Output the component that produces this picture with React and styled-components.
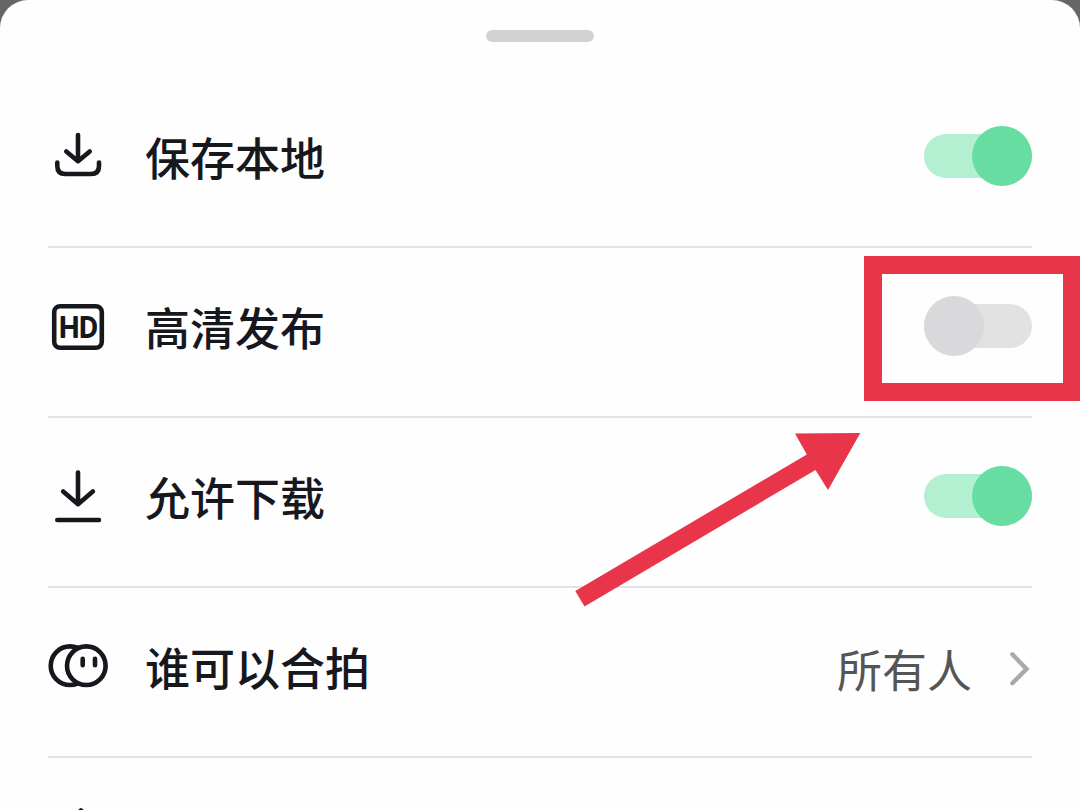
import React, { useState } from "react";
import styled, { createGlobalStyle } from "styled-components";

const GlobalStyle = createGlobalStyle`
  * { box-sizing: border-box; }
  body {
    margin: 0;
    background: #666;
    font-family: "Noto Sans CJK SC", "Noto Sans", sans-serif;
    color: #16181e;
  }
`;

const Sheet = styled.main`
  height: 100vh;
  overflow: hidden;
  padding: 0 48px;
  background: #fefefe;
  border-radius: 28px 28px 0 0;
`;

const SheetHeader = styled.header`
  height: 78px;
  padding-top: 30px;
`;

const Handle = styled.div`
  width: 108px;
  height: 12px;
  margin: 0 auto;
  border-radius: 6px;
  background: #d2d2d2;
`;

const List = styled.ul`
  list-style: none;
  margin: 0;
  padding: 0;
`;

const Row = styled.li`
  position: relative;
  display: flex;
  align-items: center;
  height: 170px;
  padding-bottom: 12px;
  border-bottom: 2px solid #e3e3e3;
`;

const Icon = styled.svg`
  flex: none;
  width: 60px;
  height: 60px;
  margin-right: 37px;
  fill: none;
  stroke: #16181e;
  stroke-width: 4.6;
  stroke-linecap: round;
  stroke-linejoin: round;
`;

const IconLetters = styled.text`
  font: 400 28px Roboto, sans-serif;
  fill: #16181e;
  stroke-width: 1.8;
`;

const Label = styled.label`
  flex: 1;
  padding-top: 2px;
  font-size: 45px;
  font-weight: 500;
  line-height: 60px;
`;

const SwitchBox = styled.span`
  position: relative;
  display: flex;
`;

const Switch = styled.input`
  appearance: none;
  display: flex;
  align-items: center;
  width: 108px;
  height: 60px;
  margin: 0;
  border-radius: 30px;
  cursor: pointer;

  &::before {
    content: "";
    flex: none;
    width: 108px;
    height: 44px;
    border-radius: 22px;
    background: ${(p) => (p.checked ? "#b2f0d1" : "#e2e2e3")};
  }

  &::after {
    content: "";
    flex: none;
    width: 60px;
    height: 60px;
    margin-left: ${(p) => (p.checked ? "-60px" : "-108px")};
    border-radius: 50%;
    background: ${(p) => (p.checked ? "#67dda1" : "#d9d9db")};
  }
`;

const Highlight = styled.span`
  position: absolute;
  inset: -40px -49px -45px -60px;
  border: 18px solid #e93549;
  pointer-events: none;
`;

const Pointer = styled.svg`
  position: absolute;
  z-index: 1;
  top: 12px;
  right: 170px;
  width: 288px;
  height: 178px;
  fill: #e93549;
  pointer-events: none;
`;

const Choice = styled.button`
  display: flex;
  align-items: center;
  gap: 36px;
  padding: 6px 0 0;
  border: 0;
  background: none;
  color: #555;
  font: inherit;
  font-size: 45px;
  font-weight: 400;
  line-height: 60px;
  cursor: pointer;
`;

const Chevron = styled.svg`
  width: 24px;
  height: 36px;
  fill: none;
  stroke: #aaa;
  stroke-width: 4.4;
  stroke-linecap: round;
`;

function SaveIcon() {
  return (
    <Icon viewBox="0 0 60 60" aria-hidden="true">
      <path d="M30 9V34.5M18.3 25.5L30 35.2L41.7 25.5" />
      <path d="M9.3 36.5V40Q9.3 48 17.3 48H43Q51 48 51 40V36.5" />
    </Icon>
  );
}

function HdIcon() {
  return (
    <Icon viewBox="0 0 60 60" aria-hidden="true">
      <rect x="6.2" y="10.2" width="47.6" height="41.6" rx="6" />
      <IconLetters x="11.3" y="41">HD</IconLetters>
    </Icon>
  );
}

function DownloadIcon() {
  return (
    <Icon viewBox="0 0 60 60" aria-hidden="true">
      <path d="M30 6.5V37.5M15.2 25.5L30 38.2L44.8 25.5M9.3 54H51" />
    </Icon>
  );
}

function DuetIcon() {
  return (
    <Icon viewBox="0 0 60 60" aria-hidden="true">
      <circle cx="22" cy="29.7" r="19.3" />
      <circle cx="38.3" cy="29.7" r="19.3" fill="#fefefe" />
      <path d="M34.7 22.7V29.3M47 22.7V29.3" />
    </Icon>
  );
}

function PrivacyIcon() {
  return (
    <Icon viewBox="0 0 60 60" aria-hidden="true">
      <path d="M10 26L33 4.5L54 26M14 26V54H50V26" />
    </Icon>
  );
}

function SwitchRow({ id, icon, label, initial, highlighted, children }) {
  const [on, setOn] = useState(initial);
  return (
    <Row>
      {icon}
      <Label htmlFor={id}>{label}</Label>
      <SwitchBox>
        <Switch
          id={id}
          type="checkbox"
          role="switch"
          checked={on}
          onChange={(e) => setOn(e.target.checked)}
        />
        {highlighted && <Highlight />}
      </SwitchBox>
      {children}
    </Row>
  );
}

export default function App() {
  return (
    <>
      <GlobalStyle />
      <Sheet>
        <SheetHeader>
          <Handle />
        </SheetHeader>
        <List>
          <SwitchRow id="save" icon={<SaveIcon />} label="保存本地" initial={true} />
          <SwitchRow id="hd" icon={<HdIcon />} label="高清发布" initial={false} highlighted />
          <SwitchRow id="download" icon={<DownloadIcon />} label="允许下载" initial={true}>
            <Pointer viewBox="574 430 288 178" aria-hidden="true">
              <path d="M575.3 591L584.5 606.5L815.5 470L828 490L860.3 433L795 433.6L806.8 454.5Z" />
            </Pointer>
          </SwitchRow>
          <Row>
            <DuetIcon />
            <Label htmlFor="duet">谁可以合拍</Label>
            <Choice id="duet" type="button">
              所有人
              <Chevron viewBox="0 0 24 36" aria-hidden="true">
                <path d="M4.3 3.3L18.5 18L4.3 32.3" />
              </Chevron>
            </Choice>
          </Row>
          <Row>
            <PrivacyIcon />
          </Row>
        </List>
      </Sheet>
    </>
  );
}
